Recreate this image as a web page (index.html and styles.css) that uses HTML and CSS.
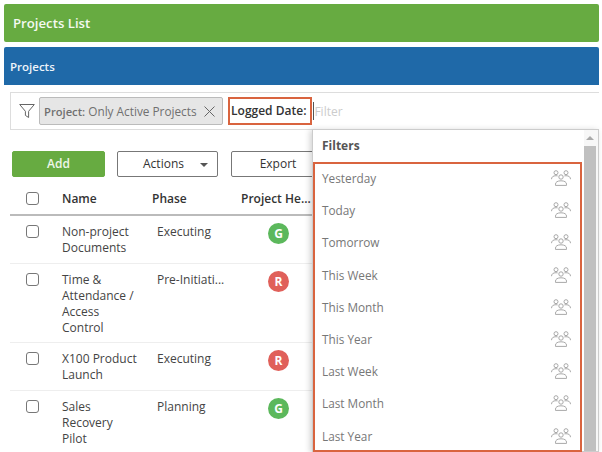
FILE: index.html
```html
<!DOCTYPE html>
<html lang="en">
<head>
<meta charset="utf-8">
<title>Projects List</title>
<link rel="stylesheet" href="styles.css">
</head>
<body>
<svg class="defs" width="0" height="0" aria-hidden="true">
  <symbol id="people" viewBox="0 0 20 16">
    <g fill="none" stroke="#a8a8a8" stroke-width="1">
      <circle cx="5" cy="2.7" r="2"/>
      <circle cx="15" cy="2.7" r="2"/>
      <circle cx="10" cy="7" r="2.2"/>
      <path d="M.5 9.200c0-2 1.500-3.500 4.500-3.500.6 0 1.100.1 1.600.2M19.500 9.200c0-2-1.500-3.500-4.500-3.500-.6 0-1.100.1-1.600.2"/>
      <path d="M4.500 15.400v-1.300c0-2 2-3.300 5.500-3.300s5.500 1.300 5.500 3.300v1.300z"/>
    </g>
  </symbol>
</svg>
<header class="title-bar">Projects List</header>
<section class="panel">
  <h2 class="panel-head">Projects</h2>
  <div class="filter-bar">
    <svg class="funnel" viewBox="0 0 16 16" width="16" height="16"><path d="M.7 1.500h14.600L9.600 8.300v6.200L6.400 12.400V8.300z" fill="none" stroke="#666" stroke-width="1"/></svg>
    <span class="chip"><span class="chip-text"><b>Project:</b> Only Active Projects</span>
      <svg class="chip-x" viewBox="0 0 11 11" width="11" height="11"><path d="M.5.500l10 10M10.500.500l-10 10" stroke="#666" stroke-width="1"/></svg>
    </span>
    <span class="logged">Logged Date:</span>
    <span class="caret"></span>
    <span class="placeholder">Filter</span>
  </div>
  <div class="toolbar">
    <button class="btn btn-add">Add</button>
    <button class="btn btn-actions">Actions<span class="tri"></span></button>
    <button class="btn btn-export">Export</button>
  </div>
  <div class="table">
    <div class="row head">
      <span class="box"></span><span>Name</span><span>Phase</span><span class="health-head">Project He...</span>
    </div>
    <div class="row">
      <span class="box"></span><span>Non-project Documents</span><span class="phase">Executing</span><span class="dot green">G</span>
    </div>
    <div class="row">
      <span class="box"></span><span>Time &amp; Attendance / Access Control</span><span class="phase">Pre-Initiati...</span><span class="dot red">R</span>
    </div>
    <div class="row">
      <span class="box"></span><span>X100 Product Launch</span><span class="phase">Executing</span><span class="dot red">R</span>
    </div>
    <div class="row">
      <span class="box"></span><span>Sales Recovery Pilot</span><span class="phase">Planning</span><span class="dot green">G</span>
    </div>
  </div>
</section>
<aside class="menu">
  <div class="menu-main">
    <div class="menu-title">Filters</div>
    <ul class="menu-list">
      <li>Yesterday<svg class="people"><use href="#people"/></svg></li>
      <li>Today<svg class="people"><use href="#people"/></svg></li>
      <li>Tomorrow<svg class="people"><use href="#people"/></svg></li>
      <li>This Week<svg class="people"><use href="#people"/></svg></li>
      <li>This Month<svg class="people"><use href="#people"/></svg></li>
      <li>This Year<svg class="people"><use href="#people"/></svg></li>
      <li>Last Week<svg class="people"><use href="#people"/></svg></li>
      <li>Last Month<svg class="people"><use href="#people"/></svg></li>
      <li>Last Year<svg class="people"><use href="#people"/></svg></li>
    </ul>
  </div>
  <div class="scrollbar"><span class="up"></span><span class="thumb"></span></div>
</aside>
</body>
</html>
```
FILE: styles.css
```css
* { box-sizing: border-box; }
html, body { margin: 0; height: 452px; overflow: hidden; }
body {
  position: relative;
  background: #fff;
  padding: 4px 3px 0 4px;
  font: 12px/16px "Open Sans", "Noto Sans", sans-serif;
  color: #444;
}
.defs { position: absolute; }
.title-bar {
  height: 38px;
  background: #67ab41;
  color: #f4f9f0;
  font-size: 13.200px;
  font-weight: 600;
  line-height: 39px;
  padding-left: 9px;
  border-radius: 2px;
}
.panel { margin-top: 5px; }
.panel-head {
  margin: 0;
  height: 38px;
  background: #1f69a8;
  color: #eef4fa;
  font-size: 11.500px;
  font-weight: 600;
  line-height: 40px;
  padding-left: 6px;
  border-radius: 2px 2px 0 0;
}
.filter-bar {
  display: flex;
  align-items: center;
  height: 38px;
  margin: 7px 0 0 6px;
  padding-left: 8px;
  border: 1px solid #ddd;
  border-right: 0;
}
.funnel { flex: none; margin-right: 4px; }
.chip {
  display: flex;
  align-items: center;
  height: 28px;
  padding: 0 7px 0 4px;
  background: #e6e6e6;
  border: 1px solid #bbb;
  border-radius: 2px;
  color: #707070;
  font-size: 11.800px;
  white-space: nowrap;
}
.chip b { font-size: 11.200px; font-weight: 600; }
.chip-x { margin-left: 7px; }
.logged {
  margin-left: 5px;
  height: 28px;
  line-height: 24px;
  padding: 0 4px 0 1.500px;
  border: 2px solid #d9643f;
  color: #333;
  font-weight: 600;
  white-space: nowrap;
}
.caret { width: 1px; height: 18px; background: #555; margin-left: 1px; }
.placeholder { color: #ccc; padding-top: 1px; }
.toolbar { display: flex; margin: 21px 0 0 8px; }
.btn {
  height: 26px;
  font: inherit;
  font-weight: 500;
  color: #333;
  background: #fff;
  border: 1px solid #777;
  border-radius: 2px;
  padding: 0;
}
.btn-add { width: 93px; background: #67ab41; border-color: #67ab41; color: #eef6e8; font-weight: 600; }
.btn-actions { position: relative; width: 101px; margin-left: 12px; padding-right: 8px; }
.tri {
  position: absolute;
  right: 9px;
  top: 11px;
  border: 4px solid transparent;
  border-top: 4px solid #555;
  border-bottom: 0;
}
.btn-export { width: 130px; margin-left: 13px; padding-right: 36px; }
.table { margin: 0 0 0 6px; }
.row {
  display: grid;
  grid-template-columns: 52px 95px 88px 60px;
  padding: 8px 0 6.700px;
  border-bottom: 1px solid #eee;
  align-items: start;
}
.row > :nth-child(1) { margin-left: 16px; }
.row > :nth-child(2) { width: 76px; }
.head {
  height: 39px;
  padding: 14px 0 0;
  border-bottom: 2px solid #bbb;
  grid-template-columns: 52px 90px 89px 80px;
  font-weight: 600;
  color: #333;
  white-space: nowrap;
}
.head > :nth-child(2) { width: auto; }
.box {
  width: 13px;
  height: 13px;
  margin-top: 1px;
  background: #fff;
  border: 1px solid #777;
  border-radius: 3px;
}
.dot {
  width: 21px;
  height: 21px;
  margin: -1px 0 0 23px;
  border-radius: 50%;
  color: #fff;
  text-align: center;
  font-weight: 700;
  line-height: 21px;
}
.green { background: #5cb85c; }
.red { background: #e0605a; }
.menu {
  position: absolute;
  left: 312px;
  top: 129px;
  width: 287px;
  height: 323px;
  display: flex;
  background: #fff;
  border: 1px solid #ccc;
  box-shadow: -2px 1px 6px rgba(0, 0, 0, .18);
}
.menu-main { width: 269px; }
.menu-title {
  height: 32px;
  line-height: 31px;
  padding-left: 9px;
  font-weight: 700;
  color: #555;
}
.menu-list {
  list-style: none;
  margin: 0;
  padding: 0;
  height: 290px;
  box-shadow: inset 0 0 0 2px #d9643f;
}
.menu-list li {
  display: flex;
  align-items: center;
  justify-content: space-between;
  height: 32.200px;
  padding: 0 11px 0 9px;
  font-size: 11.800px;
  color: #777;
}
.people { width: 20px; height: 16px; }
.scrollbar { position: relative; flex: 1; margin-left: 2px; background: #f7f7f7; }
.up {
  position: absolute;
  left: 2px;
  top: 6px;
  border: 4px solid transparent;
  border-bottom: 4px solid #aaa;
  border-top: 0;
}
.thumb {
  position: absolute;
  left: 0;
  right: 2px;
  top: 16px;
  bottom: 0;
  background: #c0c0c0;
}
```
